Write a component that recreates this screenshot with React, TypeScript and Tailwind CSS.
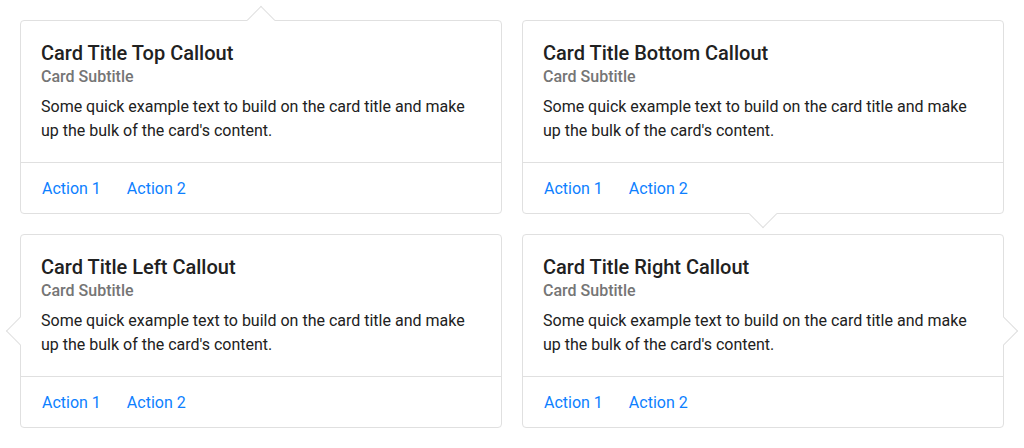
import React from "react";

type Side = "top" | "bottom" | "left" | "right";

const calloutClass: Record<Side, string> = {
  top: "left-1/2 -top-[11px] -ml-[10px] border-l border-t",
  bottom: "left-1/2 -bottom-[11px] -ml-[10px] border-r border-b",
  left: "top-1/2 -left-[11px] -mt-[10px] border-l border-b",
  right: "top-1/2 -right-[11px] -mt-[10px] border-r border-t",
};

const cards: { title: string; side: Side }[] = [
  { title: "Card Title Top Callout", side: "top" },
  { title: "Card Title Bottom Callout", side: "bottom" },
  { title: "Card Title Left Callout", side: "left" },
  { title: "Card Title Right Callout", side: "right" },
];

const CalloutCard = ({ title, side }: { title: string; side: Side }) => (
  <div className="relative bg-white border border-[#e0e0e0] rounded-[4px]">
    <div
      className={`absolute w-[20px] h-[20px] bg-white border-[#e0e0e0] rotate-45 ${calloutClass[side]}`}
    />
    <div className="relative px-5 pt-5 pb-[19px]">
      <h2 className="mb-[1px] text-[20px] leading-[24px] font-medium text-[#212121]">
        {title}
      </h2>
      <h3 className="text-[16px] leading-[22px] font-medium text-[#757575]">
        Card Subtitle
      </h3>
      <p className="mt-[7px] text-[16px] leading-[24px] text-[#212121]">
        Some quick example text to build on the card title and make up the bulk
        of the card's content.
      </p>
    </div>
    <div className="relative flex items-center gap-[26px] h-[51px] pt-[1px] px-[21px] border-t border-[#e0e0e0]">
      <button className="text-[16px] text-[#0d7fff]">Action 1</button>
      <button className="text-[16px] text-[#0d7fff]">Action 2</button>
    </div>
  </div>
);

export default function App() {
  return (
    <div
      className="w-[1024px] h-[448px] bg-white p-5 grid grid-cols-2 gap-5 content-start"
      style={{ fontFamily: "Roboto, 'Liberation Sans', sans-serif" }}
    >
      {cards.map((c) => (
        <CalloutCard key={c.title} title={c.title} side={c.side} />
      ))}
    </div>
  );
}
